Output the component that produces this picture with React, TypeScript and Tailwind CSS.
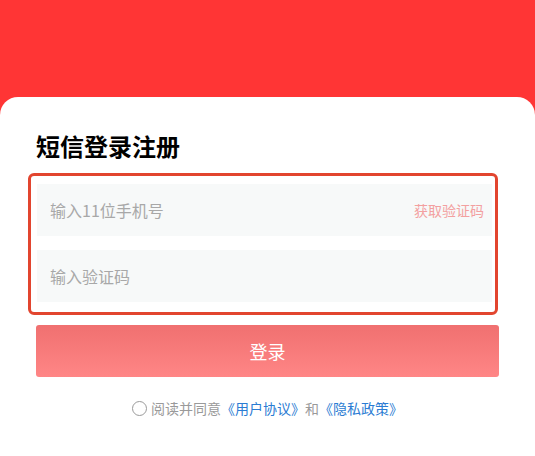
export default function App() {
  return (
    <div
      className="w-[535px] h-[456px] overflow-hidden bg-[#ff3535] flex flex-col"
      style={{ fontFamily: '"Noto Sans CJK SC", "Noto Sans", sans-serif' }}
    >
      <div className="h-[97px] shrink-0" />
      <div className="flex-1 bg-white rounded-t-[18px] px-[36px] pt-[34px]">
        <h1 className="text-[24px] leading-[30px] font-bold text-black">短信登录注册</h1>

        {/* Inputs (highlighted) */}
        <div className="mt-[12px] -ml-[8px] w-[470px] border-[3px] border-[#e2452f] rounded-[6px] pl-[6px] pr-[3px] pt-[8px] pb-[10px] flex flex-col gap-[14px]">
          <div className="h-[52px] bg-[#f7f9f9] flex items-center justify-between pl-[13px] pr-[8px]">
            <span className="text-[16px] text-[#a8a8a8]">输入11位手机号</span>
            <span className="text-[14px] text-[#f3a0a0]">获取验证码</span>
          </div>
          <div className="h-[52px] bg-[#f7f9f9] flex items-center px-[13px]">
            <span className="text-[16px] text-[#a8a8a8]">输入验证码</span>
          </div>
        </div>

        {/* Login button */}
        <button className="mt-[10px] w-full h-[52px] rounded-[3px] bg-gradient-to-b from-[#f07070] to-[#ff8686] text-white text-[18px] flex items-center justify-center">
          登录
        </button>

        {/* Agreement */}
        <div className="mt-[21px] flex items-center justify-center text-[14px] text-[#9a9a9a]">
          <span className="w-[15px] h-[15px] rounded-full border border-[#9a9a9a] mr-[4px]" />
          <span>阅读并同意</span>
          <span className="text-[#2b7cd3]">《用户协议》</span>
          <span>和</span>
          <span className="text-[#2b7cd3]">《隐私政策》</span>
        </div>
      </div>
    </div>
  );
}
